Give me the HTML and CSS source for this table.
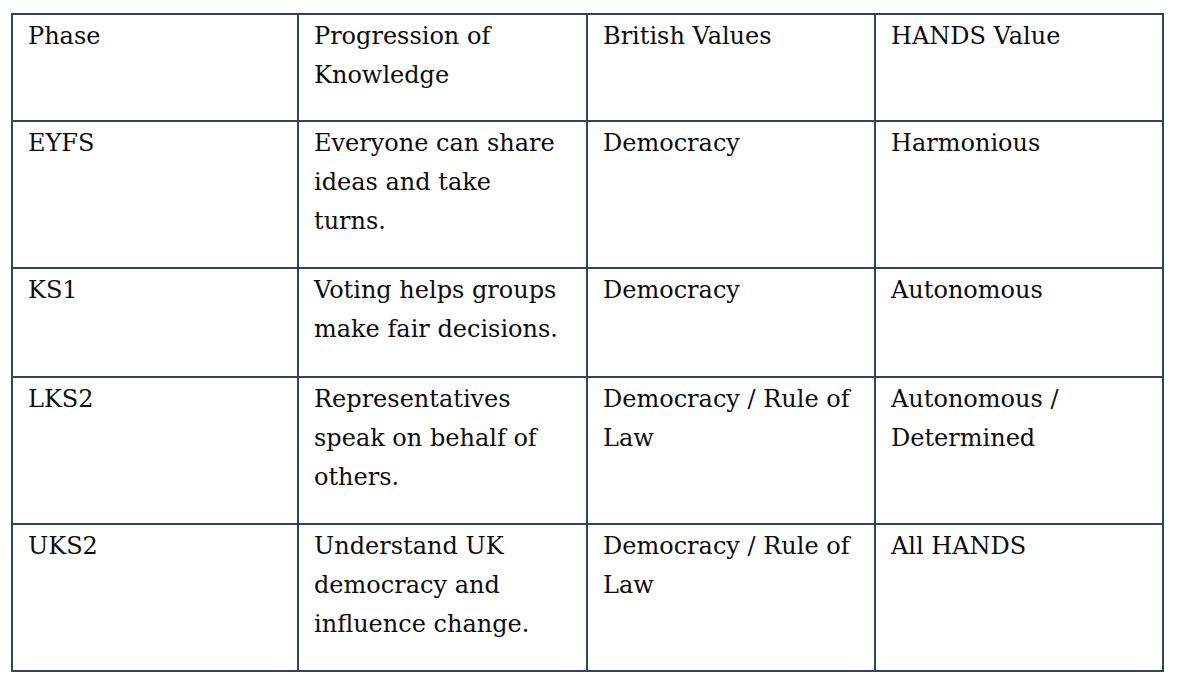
FILE: index.html
```html
<!DOCTYPE html>
<html>
<head>
<meta charset="utf-8">
<link rel="stylesheet" href="styles.css">
</head>
<body>
<table class="grid">
  <colgroup>
    <col class="c1"><col class="c2"><col class="c3"><col class="c4">
  </colgroup>
  <tr class="r-head">
    <td>Phase</td>
    <td>Progression of Knowledge</td>
    <td>British Values</td>
    <td>HANDS Value</td>
  </tr>
  <tr class="r-tall">
    <td>EYFS</td>
    <td>Everyone can share ideas and take turns.</td>
    <td>Democracy</td>
    <td>Harmonious</td>
  </tr>
  <tr class="r-mid">
    <td>KS1</td>
    <td>Voting helps groups make fair decisions.</td>
    <td>Democracy</td>
    <td>Autonomous</td>
  </tr>
  <tr class="r-tall">
    <td>LKS2</td>
    <td>Representatives speak on behalf of others.</td>
    <td>Democracy / Rule of Law</td>
    <td>Autonomous / Determined</td>
  </tr>
  <tr class="r-tall">
    <td>UKS2</td>
    <td>Understand UK democracy and influence change.</td>
    <td>Democracy / Rule of Law</td>
    <td>All HANDS</td>
  </tr>
</table>
</body>
</html>
```
FILE: styles.css
```css
html, body {
  margin: 0;
  padding: 0;
  background: #ffffff;
}
body {
  padding: 13px 0 0 11px;
}
.grid {
  border-collapse: collapse;
  table-layout: fixed;
  width: 1151px;
  font-family: "DejaVu Serif", serif;
  font-size: 24px;
  line-height: 39px;
  color: #0d0d0d;
}
.c1 { width: 286px; }
.c2 { width: 289px; }
.c3 { width: 288px; }
.c4 { width: 288px; }
.grid td {
  border: 2px solid #2e4560;
  vertical-align: top;
  padding: 2px 18px 0 15px;
}
.r-head { height: 107px; }
.r-tall { height: 147px; }
.r-mid { height: 109px; }
```
